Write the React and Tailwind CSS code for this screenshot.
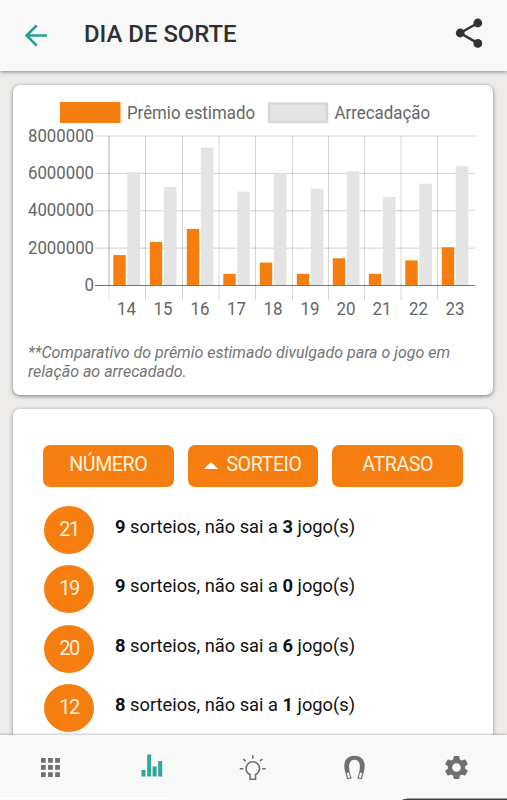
import { MdSettings } from 'react-icons/md'

const CHART = [
  { jogo: 14, x: 109, premio: 1600000, arrecadacao: 6050000 },
  { jogo: 15, x: 145.5, premio: 2300000, arrecadacao: 5250000 },
  { jogo: 16, x: 182.5, premio: 3000000, arrecadacao: 7350000 },
  { jogo: 17, x: 219, premio: 600000, arrecadacao: 5000000 },
  { jogo: 18, x: 255.5, premio: 1200000, arrecadacao: 5980000 },
  { jogo: 19, x: 292.5, premio: 600000, arrecadacao: 5160000 },
  { jogo: 20, x: 328.5, premio: 1430000, arrecadacao: 6080000 },
  { jogo: 21, x: 364.5, premio: 600000, arrecadacao: 4720000 },
  { jogo: 22, x: 401, premio: 1320000, arrecadacao: 5420000 },
  { jogo: 23, x: 437.5, premio: 2020000, arrecadacao: 6360000 },
]

const TICKS = [8000000, 6000000, 4000000, 2000000, 0]

const DEZENAS = [
  { numero: 21, sorteios: 9, atraso: 3 },
  { numero: 19, sorteios: 9, atraso: 0 },
  { numero: 20, sorteios: 8, atraso: 6 },
  { numero: 12, sorteios: 8, atraso: 1 },
]

// base line of the chart sits at y = 285, 8000000 at y = 135.5
const height = (value) => (value / 8000000) * 149.5

function Header() {
  return (
    <header className="relative z-10 flex h-[71px] shrink-0 items-center bg-[#f8f8f8] pl-6 pr-[24px] shadow-[0_1px_4px_rgba(0,0,0,0.45)]">
      <svg className="h-6 w-6 shrink-0" viewBox="0 0 24 24" fill="none" stroke="#26a094" strokeWidth="2.6">
        <path d="M23 11.5H3M12.7 1.4 2.6 11.5l10.1 10.1" />
      </svg>
      <h1 className="ml-9 flex-1 pb-[3px] text-[23.9px] font-medium leading-7 text-[#303030]">DIA DE SORTE</h1>
      <svg className="mb-[5px] h-[30px] w-[28px]" viewBox="0 0 28 30" fill="#323232">
        <path d="M23 5 5.2 15 23 25.4" fill="none" stroke="#323232" strokeWidth="2.5" />
        <circle cx="22.8" cy="5" r="4.4" />
        <circle cx="5.2" cy="15" r="4.4" />
        <circle cx="22.8" cy="25.4" r="4.4" />
      </svg>
    </header>
  )
}

function Chart() {
  return (
    <svg className="block h-[228px] w-[480px]" viewBox="13 99 480 228" fontFamily="Roboto, sans-serif" fontSize="17.5" fill="#666">
      <rect x="60" y="102" width="60.5" height="21" fill="#f67e10" />
      <text x="127" y="118.5" textLength="128" lengthAdjust="spacingAndGlyphs">Prêmio estimado</text>
      <rect x="269" y="103.5" width="58" height="18.5" fill="#e4e4e4" stroke="#d6d6d6" strokeWidth="2.5" />
      <text x="334.5" y="118.5" textLength="95.5" lengthAdjust="spacingAndGlyphs">Arrecadação</text>

      {TICKS.map((tick) => (
        <g key={tick}>
          <path d={`M95 ${285.5 - height(tick)}H475`} stroke={tick ? '#000' : '#777'} strokeOpacity={tick ? 0.18 : 1} />
          <text x="94" y={291 - height(tick)} textAnchor="end" textLength={tick ? 66 : 9.5} lengthAdjust="spacingAndGlyphs">
            {tick}
          </text>
        </g>
      ))}

      {CHART.map((bar, i) => (
        <g key={bar.jogo}>
          <path d={`M${bar.x} 136V300`} stroke="#000" strokeOpacity={i ? 0.16 : 0.12} />
          {i === 0 && <path d="M109 136V285" stroke="#000" strokeOpacity="0.2" />}
          <rect x={bar.x + 4.3} y={285 - height(bar.premio)} width="12.4" height={height(bar.premio)} fill="#f67e10" />
          <rect x={bar.x + 18.3} y={285 - height(bar.arrecadacao)} width="12.6" height={height(bar.arrecadacao)} fill="#e4e4e4" />
          <text x={bar.x + 17.6} y="315" textAnchor="middle" textLength="19" lengthAdjust="spacingAndGlyphs">{bar.jogo}</text>
        </g>
      ))}
    </svg>
  )
}

function SortButton({ children, active }) {
  return (
    <button className="flex h-[42px] flex-1 items-center justify-center rounded-[7px] bg-[#f67e10] pb-[2px] text-[19.6px] tracking-[-0.4px] text-[#fff2dc]">
      {active && (
        <svg className="mr-[8px] h-[7px] w-[14px]" viewBox="0 0 14 7" fill="#fff">
          <path d="M0 7 7 0l7 7z" />
        </svg>
      )}
      {children}
    </button>
  )
}

function Dezena({ numero, sorteios, atraso }) {
  return (
    <li className="flex h-[59.3px] items-start">
      <span className="flex h-[48px] w-[50px] shrink-0 items-center justify-center rounded-[50%] bg-[#f67e10] pb-[2px] text-[20px] tracking-[-1.5px] text-[#fff2dc]">
        {numero}
      </span>
      <p className="ml-[21px] mt-[9px] whitespace-nowrap text-[18.3px] leading-6 text-[#111]">
        <b>{sorteios}</b> sorteios, não sai a <b>{atraso}</b> jogo(s)
      </p>
    </li>
  )
}

function TabBar() {
  return (
    <nav className="relative z-10 h-[65px] shrink-0 bg-[#f8f8f8] shadow-[0_-1px_2px_rgba(0,0,0,0.22)]">
      <div className="grid h-full grid-cols-5 items-center justify-items-center text-[#6f6f6f]">
        <svg className="h-[19px] w-[19px]" viewBox="0 0 19 19" fill="currentColor">
          <path d="M0 0h4.7v4.7H0zM7.1 0h4.7v4.7H7.1zM14.2 0h4.7v4.7h-4.7zM0 7.1h4.7v4.7H0zM7.1 7.1h4.7v4.7H7.1zM14.2 7.1h4.7v4.7h-4.7zM0 14.2h4.7v4.7H0zM7.1 14.2h4.7v4.7H7.1zM14.2 14.2h4.7v4.7h-4.7z" />
        </svg>
        <svg className="mb-[5px] h-[23px] w-[22px]" viewBox="0 0 22 23" fill="#2fa699">
          <path d="M.5 16h4v6.5h-4zM6.2.5h4v22h-4zM11.6 12.5h4v10h-4zM17.2 7h4v15.5h-4z" />
        </svg>
        <svg className="h-[28px] w-[28px]" viewBox="0 0 28 28" fill="none" stroke="currentColor" strokeWidth="1.6">
          <path d="M11.1 25.2v-4.6c-2.4-1.1-4-3.2-4-6.1a6.7 6.7 0 0 1 13.4 0c0 2.9-1.6 5-4 6.1v4.6zM13.8 1.3v3.4M4.3 5l2.3 2.2M23.3 5 21 7.2M.8 14.7h3.6M23.2 14.7h3.6" />
        </svg>
        <svg className="h-[25px] w-[21px]" viewBox="0 0 21 25" fill="currentColor">
          <path d="M3.2 24.3C2.2 20 .3 15.8.3 11 .3 4.4 4.3.7 10.5.7S20.700 4.400 20.700 11c0 4.800-1.900 9-2.900 13.300l-4.500-.7c1.400-4.200 2.600-7.800 2.600-12.300 0-4.100-2.100-6.500-5.400-6.500s-5.400 2.400-5.400 6.500c0 4.500 1.200 8.100 2.600 12.300z" />
          <path d="m2.800 18.300 1.900-.7 1.500 5-2 .4zM18.200 18.300l-1.900-.7-1.500 5 2 .4z" fill="#f8f8f8" />
        </svg>
        <MdSettings size={29} />
      </div>
      <div className="absolute bottom-0 left-0 h-[2px] w-[168px] bg-white" />
      <svg className="absolute bottom-0 right-0 h-[2px] w-[105px]" viewBox="0 0 105 2" fill="#414141">
        <path d="M0 2C2 1 4 .5 8 .5h97V2z" />
      </svg>
    </nav>
  )
}

export default function App() {
  return (
    <div className="flex h-[800px] w-[507px] flex-col overflow-hidden bg-[#edecea] font-[Roboto,sans-serif]">
      <Header />
      <main className="flex min-h-0 flex-1 flex-col gap-[14px] pl-[13px] pr-[14px] pt-[14px]">
        <section className="h-[310px] shrink-0 rounded-[7px] bg-white pt-[14px] shadow-[0_1px_4px_rgba(0,0,0,0.5)]">
          <Chart />
          <p className="ml-[15px] mt-[17px] whitespace-nowrap text-[16px] italic leading-[18.5px] text-[#747474]">
            **Comparativo do prêmio estimado divulgado para o jogo em
            <br />
            relação ao arrecadado.
          </p>
        </section>
        <section className="h-[420px] shrink-0 rounded-[7px] bg-white px-[30px] pt-[36px] shadow-[0_1px_4px_rgba(0,0,0,0.4)]">
          <div className="flex gap-[14px]">
            <SortButton>NÚMERO</SortButton>
            <SortButton active>SORTEIO</SortButton>
            <SortButton>ATRASO</SortButton>
          </div>
          <ul className="ml-px mt-[19px]">
            {DEZENAS.map((dezena) => (
              <Dezena key={dezena.numero} {...dezena} />
            ))}
          </ul>
        </section>
      </main>
      <TabBar />
    </div>
  )
}
